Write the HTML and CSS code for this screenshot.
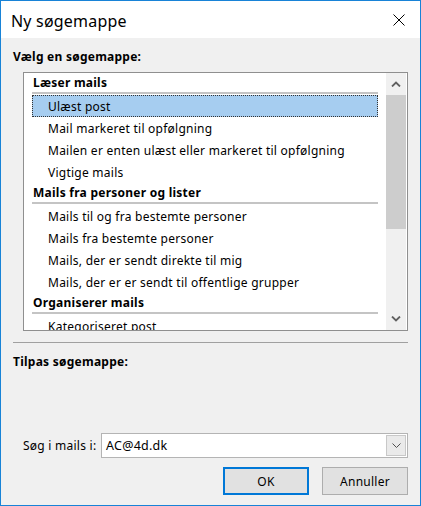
FILE: index.html
```html
<!DOCTYPE html>
<html lang="da">
<head>
<meta charset="utf-8">
<title>Ny søgemappe</title>
<link rel="stylesheet" href="styles.css">
</head>
<body>
<div class="window">
  <div class="titlebar">
    <span class="title">Ny søgemappe</span>
    <svg class="close" width="12" height="12" viewBox="0 0 12 12"><path d="M0.5 0.5 L11.5 11.5 M11.5 0.5 L0.5 11.5" stroke="#000" stroke-width="1" fill="none"/></svg>
  </div>
  <div class="content">
    <div class="label bold">Vælg en søgemappe:</div>
    <div class="listbox">
      <div class="list">
        <div class="group">Læser mails</div>
        <div class="item selected">Ulæst post</div>
        <div class="item">Mail markeret til opfølgning</div>
        <div class="item">Mailen er enten ulæst eller markeret til opfølgning</div>
        <div class="item">Vigtige mails</div>
        <div class="group">Mails fra personer og lister</div>
        <div class="item">Mails til og fra bestemte personer</div>
        <div class="item">Mails fra bestemte personer</div>
        <div class="item">Mails, der er sendt direkte til mig</div>
        <div class="item">Mails, der er er sendt til offentlige grupper</div>
        <div class="group">Organiserer mails</div>
        <div class="item">Kategoriseret post</div>
      </div>
      <div class="scrollbar">
        <div class="sb-btn"><svg width="10" height="6" viewBox="0 0 10 6"><path d="M1 5.5 L5 1.5 L9 5.5" stroke="#606060" stroke-width="1.8" fill="none"/></svg></div>
        <div class="sb-thumb"></div>
        <div class="sb-track"></div>
        <div class="sb-btn"><svg width="10" height="6" viewBox="0 0 10 6"><path d="M1 0.5 L5 4.5 L9 0.5" stroke="#606060" stroke-width="1.8" fill="none"/></svg></div>
      </div>
    </div>
    <div class="separator"></div>
    <div class="label bold custom">Tilpas søgemappe:</div>
    <div class="search-row">
      <span class="search-label">Søg i mails i:</span>
      <div class="combo">
        <span class="combo-value">AC@4d.dk</span>
        <span class="combo-btn"><svg width="9" height="5" viewBox="0 0 9 5"><path d="M0.5 0.5 L4.5 4.5 L8.5 0.5" stroke="#505050" stroke-width="1" fill="none"/></svg></span>
      </div>
    </div>
    <div class="buttons">
      <button class="btn default">OK</button>
      <button class="btn">Annuller</button>
    </div>
  </div>
</div>
</body>
</html>
```

FILE: styles.css
```css
html, body {
  margin: 0;
  padding: 0;
}
body {
  width: 421px;
  height: 506px;
  font-family: "Noto Sans", "Open Sans", sans-serif;
  font-size: 12px;
  letter-spacing: 0.25px;
  color: #000;
  overflow: hidden;
}
.window {
  box-sizing: border-box;
  width: 421px;
  height: 506px;
  border: 1px solid #1883d7;
  display: flex;
  flex-direction: column;
  background: #f0f0f0;
}
.titlebar {
  height: 37px;
  flex: none;
  background: #fff;
  display: flex;
  align-items: center;
  justify-content: space-between;
  padding: 0 15px 0 10px;
}
.title {
  font-size: 16px;
  letter-spacing: 0.2px;
  padding-top: 2px;
  color: #000;
}
.close {
  display: block;
  margin-top: 1px;
}
.content {
  flex: 1;
  display: flex;
  flex-direction: column;
  padding: 9px 12px 10px 12px;
}
.label {
  height: 18px;
  line-height: 18px;
  box-sizing: border-box;
  padding-top: 1px;
}
.bold {
  font-weight: bold;
}
.listbox {
  margin: 7px 0 0 10px;
  height: 259px;
  box-sizing: border-box;
  border: 1px solid #8f8f8f;
  background: #fff;
  display: flex;
}
.list {
  flex: 1;
  overflow: hidden;
  padding: 0 8px;
}
.group {
  font-weight: bold;
  height: 19px;
  line-height: 18px;
  padding-top: 1px;
  box-sizing: border-box;
  padding-left: 1px;
  border-bottom: 2px solid #c4c4c4;
  margin-bottom: 1px;
  height: 21px;
  white-space: nowrap;
}
.item {
  height: 22px;
  line-height: 18px;
  padding-top: 3px;
  padding-left: 16px;
  white-space: nowrap;
  box-sizing: border-box;
}
.item.selected {
  background: #a6cdf0;
  outline: 1px dotted #333;
  outline-offset: -1px;
}
.scrollbar {
  width: 20px;
  margin-right: 1px;
  display: flex;
  flex-direction: column;
  background: #f0f0f0;
}
.sb-btn {
  height: 22px;
  flex: none;
  display: flex;
  align-items: center;
  justify-content: center;
}
.sb-thumb {
  height: 134px;
  flex: none;
  background: #cdcdcd;
}
.sb-track {
  flex: 1;
}
.separator {
  margin-top: 11px;
  height: 1px;
  background: #a0a0a0;
}
.custom {
  margin-top: 9px;
}
.search-row {
  margin-top: auto;
  display: flex;
  align-items: center;
  padding-left: 10px;
}
.search-label {
  width: 78px;
  flex: none;
}
.combo {
  flex: 1;
  height: 25px;
  box-sizing: border-box;
  border: 1px solid #b4b4b4;
  background: #fff;
  display: flex;
  align-items: center;
}
.combo-value {
  flex: 1;
  padding-left: 4px;
  font-size: 12.5px;
}
.combo-btn {
  width: 20px;
  height: 21px;
  box-sizing: border-box;
  margin-right: 1px;
  border: 1px solid #c8c8c8;
  background: #eaeaea;
  display: flex;
  align-items: center;
  justify-content: center;
}
.buttons {
  margin-top: 9px;
  display: flex;
  justify-content: flex-end;
  gap: 13px;
}
.btn {
  width: 86px;
  height: 28px;
  box-sizing: border-box;
  border: 1px solid #adadad;
  background: #e1e1e1;
  font-family: "Noto Sans", "Open Sans", sans-serif;
  font-size: 12px;
  letter-spacing: 0.25px;
  color: #000;
  padding: 0;
}
.btn.default {
  border: 2px solid #0078d7;
}
```
